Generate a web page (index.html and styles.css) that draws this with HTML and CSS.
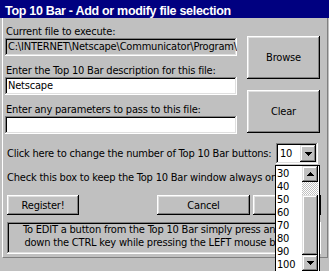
FILE: index.html
```html
<!DOCTYPE html>
<html lang="en">
<head>
    <meta charset="UTF-8">
    <title>Top 10 Bar - Add or modify file selection</title>
    <link rel="stylesheet" href="styles.css">
</head>
<body>
    <div class="window">
        <div class="titlebar">Top 10 Bar - Add or modify file selection</div>

        <div class="client">
            <div class="top">
                <div class="fields">
                    <div class="label">Current file to execute:</div>
                    <div class="field readonly">C:\INTERNET\Netscape\Communicator\Program\netscape.exe</div>
                    <div class="label">Enter the Top 10 Bar description for this file:</div>
                    <div class="field">Netscape</div>
                    <div class="label">Enter any parameters to pass to this file:</div>
                    <div class="field"></div>
                </div>
                <div class="side">
                    <button class="btn big">Browse</button>
                    <button class="btn big">Clear</button>
                </div>
            </div>

            <div class="count-row">
                <span class="text">Click here to change the number of Top 10 Bar buttons:</span>
                <div class="combo">
                    <span class="combo-value">10</span>
                    <span class="combo-btn">
                        <svg width="7" height="4" viewBox="0 0 7 4" shape-rendering="crispEdges"><path d="M0 0h7v1h-1v1h-1v1h-1v1h-1v-1h-1v-1h-1v-1h-1z" fill="#000"/></svg>
                    </span>
                    <div class="combo-list">
                        <ul class="items">
                            <li>30</li>
                            <li>40</li>
                            <li>50</li>
                            <li>60</li>
                            <li>70</li>
                            <li>80</li>
                            <li>90</li>
                            <li>100</li>
                        </ul>
                        <div class="scrollbar">
                            <span class="sb-btn">
                                <svg width="7" height="4" viewBox="0 0 7 4" shape-rendering="crispEdges"><path d="M3 0h1v1h1v1h1v1h1v1h-7v-1h1v-1h1v-1h1z" fill="#000"/></svg>
                            </span>
                            <span class="sb-track"></span>
                            <span class="sb-thumb"></span>
                            <span class="sb-btn">
                                <svg width="7" height="4" viewBox="0 0 7 4" shape-rendering="crispEdges"><path d="M0 0h7v1h-1v1h-1v1h-1v1h-1v-1h-1v-1h-1v-1h-1z" fill="#000"/></svg>
                            </span>
                        </div>
                    </div>
                </div>
            </div>

            <div class="check-row">
                <span class="text">Check this box to keep the Top 10 Bar window always on top</span>
                <span class="checkbox"></span>
            </div>

            <div class="actions">
                <button class="btn register">Register!</button>
                <button class="btn cancel">Cancel</button>
                <button class="btn ok">OK</button>
            </div>

            <div class="info">
                To EDIT a button from the Top 10 Bar simply press and hold<br>
                down the CTRL key while pressing the LEFT mouse button.
            </div>
        </div>
    </div>
</body>
</html>
```

FILE: styles.css
```css
body {
    margin: 0;
    background: #c0c0c0;
}

.window {
    width: 329px;
    height: 271px;
    overflow: hidden;
    background: #c0c0c0;
    font-family: "DejaVu Sans Condensed", "Liberation Sans Narrow", sans-serif;
    font-size: 11px;
    letter-spacing: -0.2px;
    color: #000;
}

.titlebar {
    height: 18px;
    box-sizing: border-box;
    padding: 4px 0 0 5px;
    line-height: 14px;
    background: #000080;
    color: #fff;
    font-family: "Liberation Sans", Arial, sans-serif;
    font-weight: bold;
    font-size: 12.5px;
    letter-spacing: -0.3px;
    white-space: nowrap;
}

.client {
    margin-left: 2px;
    width: 326px;
    height: 240px;
    box-sizing: border-box;
    padding: 6px 6px 0 2px;
    border-left: 1px solid #fff;
    border-right: 1px solid #808080;
    border-bottom: 1px solid #808080;
}

/* top block: three fields on the left, two big buttons on the right */
.top {
    display: flex;
    gap: 10px;
}

.fields {
    width: 232px;
}

.label {
    height: 13px;
    line-height: 15px;
    padding-left: 1px;
    margin-top: 7px;
    white-space: nowrap;
}

.label:first-child {
    margin-top: 0;
}

.field {
    margin-top: 1px;
    height: 18px;
    line-height: 18px;
    padding: 0 3px;
    background: #fff;
    white-space: nowrap;
    overflow: hidden;
    box-shadow: inset -1px -1px #fff, inset 1px 1px #808080, inset -2px -2px #dfdfdf, inset 2px 2px #000;
}

.field.readonly {
    background: #c0c0c0;
}

.side {
    width: 73px;
    padding-top: 12px;
    display: flex;
    flex-direction: column;
    gap: 11px;
}

.btn {
    display: block;
    height: 20px;
    padding: 0;
    border: none;
    background: #c0c0c0;
    font: inherit;
    letter-spacing: inherit;
    color: #000;
    box-shadow: inset -1px -1px #000, inset 1px 1px #fff, inset -2px -2px #808080, inset 2px 2px #dfdfdf;
}

.btn.big {
    height: 43px;
}

.text {
    line-height: 14px;
    padding-left: 2px;
    white-space: nowrap;
}

/* number of buttons combo */
.count-row {
    margin-top: 9px;
    display: flex;
    align-items: center;
    height: 21px;
}

.combo {
    position: relative;
    margin-left: auto;
    margin-right: 3px;
    width: 42px;
    flex: none;
    height: 21px;
    box-sizing: border-box;
    padding: 2px;
    display: flex;
    background: #fff;
    box-shadow: inset -1px -1px #fff, inset 1px 1px #808080, inset -2px -2px #dfdfdf, inset 2px 2px #000;
}

.combo-value {
    flex: 1;
    line-height: 17px;
    padding-left: 2px;
}

.combo-btn,
.sb-btn {
    width: 16px;
    display: flex;
    align-items: center;
    justify-content: center;
    background: #c0c0c0;
    box-shadow: inset -1px -1px #000, inset 1px 1px #dfdfdf, inset -2px -2px #808080, inset 2px 2px #fff;
}

.combo-list {
    position: absolute;
    z-index: 2;
    left: -1px;
    top: 22px;
    width: 45px;
    height: 107px;
    box-sizing: border-box;
    border: 1px solid #000;
    background: #fff;
    display: flex;
}

.items {
    flex: 1;
    margin: 0;
    padding: 1px 0 0 1px;
    list-style: none;
}

.items li {
    height: 13px;
    line-height: 14px;
}

.scrollbar {
    width: 16px;
    margin-right: 1px;
    display: flex;
    flex-direction: column;
}

.sb-btn {
    height: 16px;
    flex: none;
}

.sb-track {
    height: 13px;
    background-image: conic-gradient(#fff 25%, #c0c0c0 0 50%, #fff 0 75%, #c0c0c0 0);
    background-size: 2px 2px;
}

.sb-thumb {
    height: 60px;
    background: #c0c0c0;
    box-shadow: inset -1px -1px #000, inset 1px 1px #dfdfdf, inset -2px -2px #808080, inset 2px 2px #fff;
}

.check-row {
    margin-top: 7px;
    display: flex;
    align-items: center;
    gap: 6px;
}

.checkbox {
    width: 11px;
    height: 11px;
    background: #fff;
    box-shadow: inset 1px 1px #808080, inset -1px -1px #fff;
}

/* bottom buttons */
.actions {
    margin-top: 10px;
    display: flex;
}

.register {
    margin-left: 2px;
    width: 72px;
}

.cancel {
    margin-left: auto;
    width: 93px;
}

.ok {
    margin-left: 3px;
    width: 68px;
}

.info {
    margin: 7px 0 0 2px;
    height: 32px;
    box-sizing: border-box;
    padding-top: 1px;
    line-height: 13px;
    text-align: center;
    white-space: nowrap;
    box-shadow: inset -1px -1px #fff, inset 1px 1px #808080, inset -2px -2px #dfdfdf, inset 2px 2px #000;
}
```
